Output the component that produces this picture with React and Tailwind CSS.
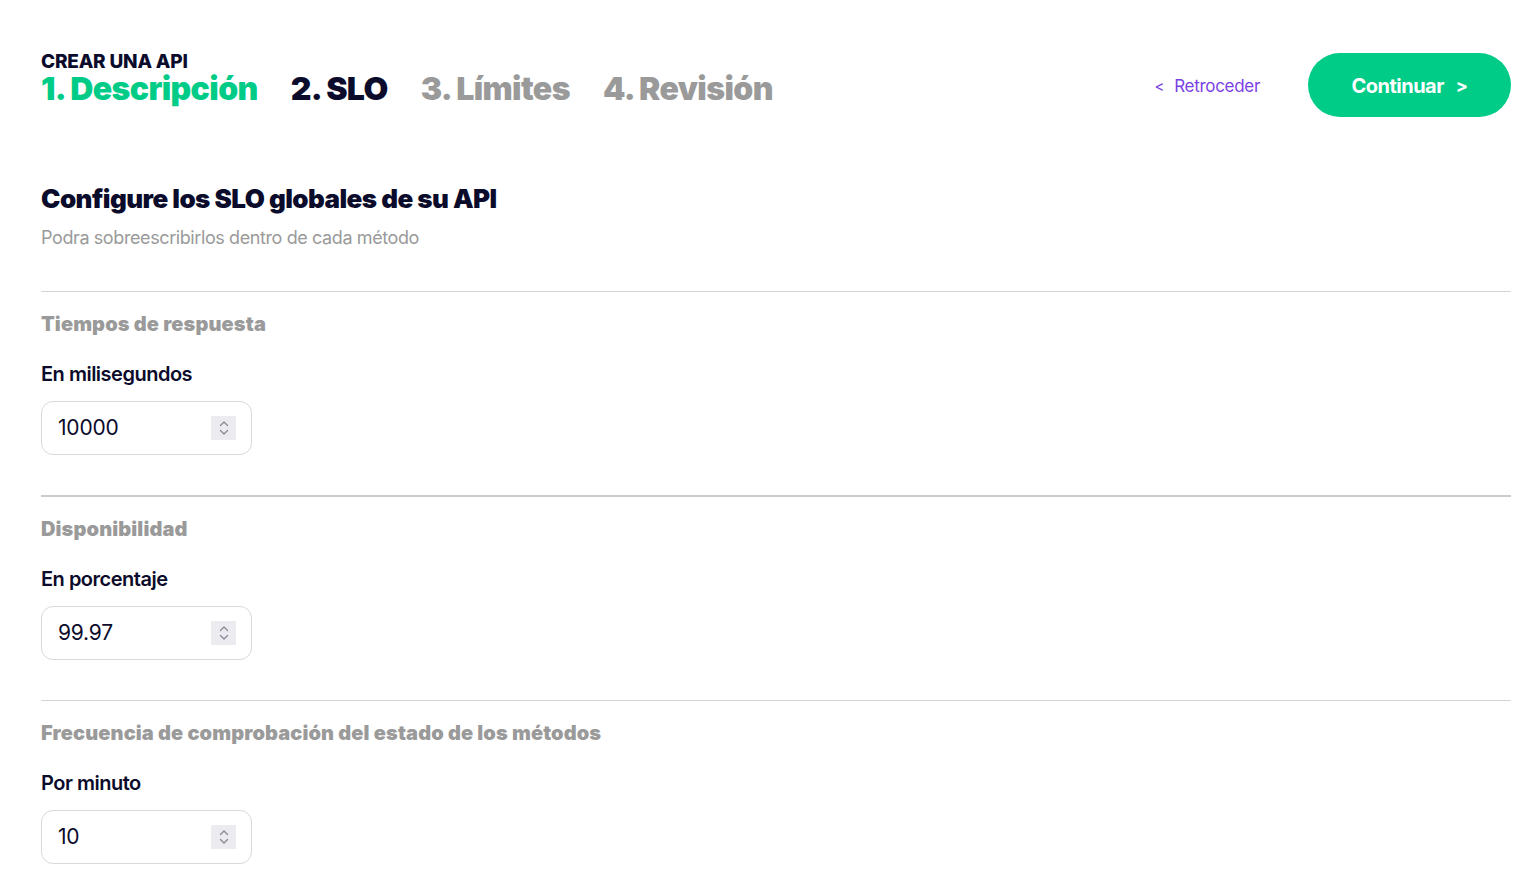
import React from "react";

const F = { fontFamily: "Inter, 'Noto Sans', sans-serif" };

function Spinner() {
  return (
    <div className="w-[25px] h-[24px] bg-[#ebebf0] flex items-center justify-center">
      <svg width="12" height="18" viewBox="0 0 12 18" fill="none" stroke="#8a8a99" strokeWidth="1.4" strokeLinecap="round" strokeLinejoin="round">
        <path d="M2.5 6.5 L6 3 L9.5 6.5" />
        <path d="M2.5 11.5 L6 15 L9.5 11.5" />
      </svg>
    </div>
  );
}

function Field({ label, value }) {
  return (
    <div className="flex flex-col">
      <div className="text-[20px] leading-[24px] font-semibold text-[#0b0b2b] tracking-[-0.5px] h-[24px]">{label}</div>
      <div className="mt-[15px] w-[211px] h-[54px] rounded-[12px] border border-[#d9d9de] flex items-center justify-between pl-[16px] pr-[15px]">
        <span className="text-[21px] text-[#0b0b2b] tracking-[-0.2px]">{value}</span>
        <Spinner />
      </div>
    </div>
  );
}

function Section({ title, label, value, thick }) {
  return (
    <div className="flex flex-col">
      <div className={thick ? "h-[2px] bg-[#cccccc]" : "h-px bg-[#d4d4d4]"} />
      <div className="mt-[20px] text-[20px] leading-[24px] font-black text-[#9a9a9a] tracking-[0.12px]">{title}</div>
      <div className="mt-[26px]">
        <Field label={label} value={value} />
      </div>
    </div>
  );
}

export default function App() {
  return (
    <div className="min-h-screen bg-white pl-[41px] pr-[25px]" style={F}>
      <div className="flex items-start justify-between pt-[53px]">
        <div className="flex flex-col -mt-[1px]">
          <div className="text-[19px] leading-[20px] font-extrabold text-[#0b0b2b] tracking-[-0.2px]">CREAR UNA API</div>
          <div className="flex items-baseline gap-[33px] text-[32px] leading-[34px] font-black tracking-[-0.6px]">
            <span className="text-[#00cc88]">1. Descripción</span>
            <span className="text-[#0b0b2b]">2. SLO</span>
            <span className="text-[#9a9a9a]">3. Límites</span>
            <span className="text-[#9a9a9a]">4. Revisión</span>
          </div>
        </div>
        <div className="flex items-center">
          <button className="flex items-center gap-[10px] text-[#7b3fe4] text-[17px] tracking-[-0.3px] mr-[48px] pt-[4px]">
            <span className="text-[15px]">&lt;</span>
            <span>Retroceder</span>
          </button>
          <button className="w-[203px] h-[64px] rounded-full bg-[#00cc88] text-white text-[20px] font-bold tracking-[-0.5px] flex items-center justify-center gap-[12px] pt-[1px]">
            <span>Continuar</span>
            <span className="text-[18px]">&gt;</span>
          </button>
        </div>
      </div>

      <div className="mt-[66px]">
        <h1 className="text-[26px] leading-[32px] font-black text-[#0b0b2b] tracking-[-0.55px]">Configure los SLO globales de su API</h1>
        <p className="mt-[11px] text-[18px] leading-[24px] text-[#9a9a9a] tracking-[-0.4px]">Podra sobreescribirlos dentro de cada método</p>
      </div>

      <div className="mt-[41px] flex flex-col gap-[40px]">
        <Section title="Tiempos de respuesta" label="En milisegundos" value="10000" />
        <Section title="Disponibilidad" label="En porcentaje" value="99.97" thick />
        <Section title="Frecuencia de comprobación del estado de los métodos" label="Por minuto" value="10" />
      </div>
    </div>
  );
}
